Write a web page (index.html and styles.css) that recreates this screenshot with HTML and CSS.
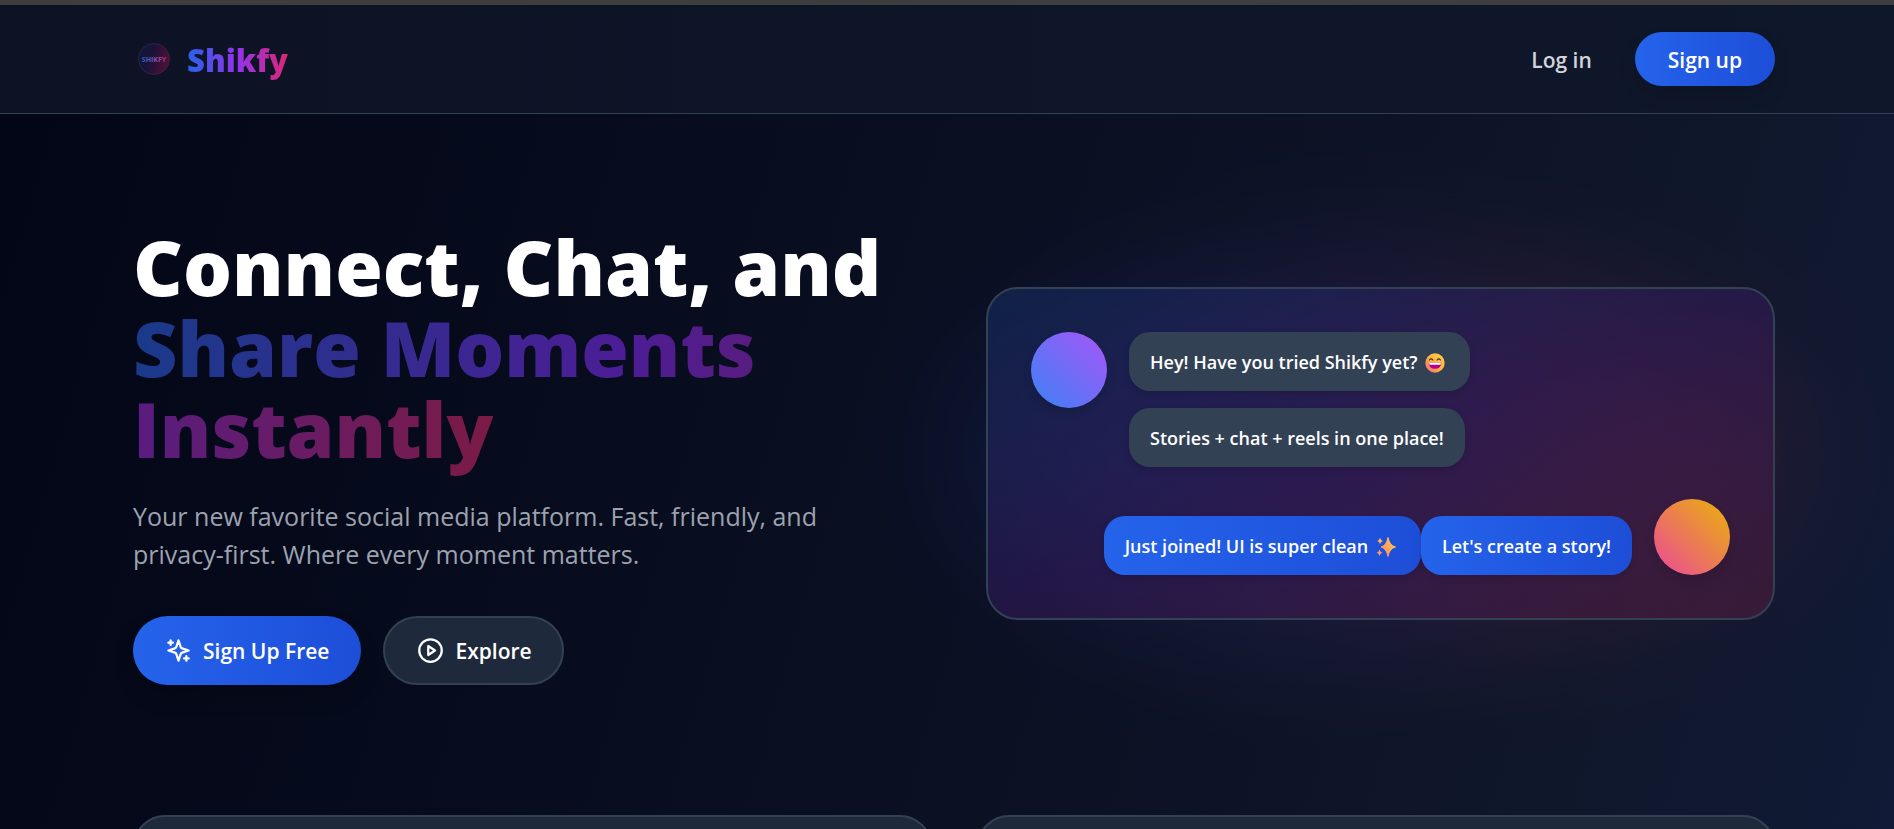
FILE: index.html
```html
<!DOCTYPE html>
<html lang="en">
<head>
<meta charset="utf-8">
<meta name="viewport" content="width=device-width, initial-scale=1">
<title>Shikfy</title>
<link rel="stylesheet" href="styles.css">
</head>
<body>
<header class="site-header">
  <div class="container header-row">
    <a class="brand" href="#">
      <svg class="brand-logo" viewBox="0 0 32 32" aria-hidden="true">
        <defs>
          <linearGradient id="logo-bg" x1="0" y1="0" x2="1" y2="0.3"><stop offset="0" stop-color="#071a3c"/><stop offset=".5" stop-color="#1c1238"/><stop offset="1" stop-color="#4c1038"/></linearGradient>
          <linearGradient id="logo-text" x1="0" y1="0" x2="1" y2="0"><stop offset="0" stop-color="#2563b8"/><stop offset=".5" stop-color="#7a58b8"/><stop offset="1" stop-color="#b8326e"/></linearGradient>
        </defs>
        <circle cx="16" cy="16" r="15.5" fill="url(#logo-bg)" stroke="#3a2a4c" stroke-width=".7"/>
        <text class="logo-word" x="16" y="19" text-anchor="middle" fill="url(#logo-text)">SHIKFY</text>
      </svg>
      <span class="brand-name">Shikfy</span>
    </a>
    <nav class="header-nav">
      <a class="login" href="#">Log in</a>
      <a class="signup" href="#">Sign up</a>
    </nav>
  </div>
</header>
<main>
  <section class="container hero">
    <div class="intro">
      <h1>Connect, Chat, and <span class="accent">Share Moments Instantly</span></h1>
      <p>Your new favorite social media platform. Fast, friendly, and privacy-first. Where every moment matters.</p>
      <div class="actions">
        <button class="btn btn-primary" type="button">
          <svg class="icon" viewBox="0 0 24 24" aria-hidden="true"><path d="M12 3l-1.900 5.800a2 2 0 0 1-1.300 1.300L3 12l5.800 1.900a2 2 0 0 1 1.300 1.300L12 21l1.900-5.800a2 2 0 0 1 1.300-1.300L21 12l-5.800-1.900a2 2 0 0 1-1.300-1.300L12 3Z"/><path d="M5 3v4M19 17v4M3 5h4M17 19h4"/></svg>
          Sign Up Free
        </button>
        <button class="btn btn-outline" type="button">
          <svg class="icon" viewBox="0 0 24 24" aria-hidden="true"><circle cx="12" cy="12" r="10"/><path d="M10 8l6 4-6 4z"/></svg>
          Explore
        </button>
      </div>
    </div>
    <div class="preview">
      <div class="chat">
        <div class="incoming">
          <div class="avatar avatar-blue"></div>
          <div class="messages">
            <div class="bubble">Hey! Have you tried Shikfy yet?
              <svg class="emoji" viewBox="0 0 20 20" role="img" aria-label="Grinning face">
                <defs><linearGradient id="face" x1="0" y1="1" x2="1" y2="0"><stop offset="0" stop-color="#f0608a"/><stop offset=".45" stop-color="#ffb13b"/><stop offset="1" stop-color="#ffd34a"/></linearGradient></defs>
                <circle cx="10" cy="10" r="9.700" fill="url(#face)"/>
                <path d="M4.500 7q1.700-2.400 3.400 0M12.100 7q1.700-2.400 3.400 0" fill="none" stroke="#4b2b35" stroke-width="1.200" stroke-linecap="round"/>
                <path d="M3.600 9.800h12.800q-.3 6-6.400 6t-6.400-6z" fill="#b4008a"/><path d="M4 9.800h12l-.5 2H4.500z" fill="#fff"/>
              </svg>
            </div>
            <div class="bubble">Stories + chat + reels in one place!</div>
          </div>
        </div>
        <div class="outgoing">
          <div class="bubble bubble-own">Just joined! UI is super clean
            <svg class="emoji" viewBox="0 0 20 20" role="img" aria-label="Sparkles">
              <defs><linearGradient id="spark" x1="0" y1="1" x2="1" y2="0"><stop offset="0" stop-color="#ff8068"/><stop offset="1" stop-color="#ffd34e"/></linearGradient></defs>
              <g fill="url(#spark)"><path d="M12 .5Q13.500 8.500 19.500 10Q13.500 11.500 12 19.500Q10.500 11.500 5 10Q10.500 8.500 12 .5Z" stroke="url(#spark)" stroke-width="1" stroke-linejoin="round"/><path d="M4 .8q.6 2.600 3 3.200-2.400.6-3 3.200-.6-2.600-3-3.200 2.400-.6 3-3.200zM3.500 12.500q.6 2.600 3 3.200-2.400.6-3 3.200-.6-2.600-3-3.200 2.400-.6 3-3.200z"/></g>
            </svg>
          </div>
          <div class="bubble bubble-own">Let's create a story!</div>
          <div class="avatar avatar-warm"></div>
        </div>
      </div>
    </div>
  </section>
  <section class="container features">
    <article class="feature"></article>
    <article class="feature"></article>
  </section>
</main>
</body>
</html>
```

FILE: styles.css
```css
* { box-sizing: border-box; }

body {
  margin: 0;
  height: 100vh;
  overflow: hidden;
  color: #fff;
  font-family: "Segoe UI", "Open Sans", "Noto Sans", sans-serif;
  background: linear-gradient(106deg, #020617, #0b1022 55%, #0f172a 82%, #111a36);
}

a { color: inherit; text-decoration: none; }

.container {
  width: 100%;
  max-width: 1728px;
  margin: 0 auto;
  padding: 0 36px 0 50px;
}

.site-header {
  position: relative;
  z-index: 1;
  border-top: 5px solid #3e3e3e;
  border-bottom: 1px solid #334155;
  background: linear-gradient(to right, #0d1325, #0f172a);
}

.header-row {
  display: flex;
  align-items: center;
  justify-content: space-between;
  height: 108px;
}

.brand {
  display: flex;
  align-items: center;
  gap: 17px;
  padding-left: 5px;
}

.brand-logo { width: 32px; height: 32px; }

.logo-word {
  font-family: "Open Sans", sans-serif;
  font-size: 7px;
  font-weight: 700;
}

.brand-name {
  padding-top: 2px;
  font-size: 31px;
  line-height: 44px;
  font-weight: 800;
  color: transparent;
  background: linear-gradient(to right, #2563eb, #9333ea 50%, #db2777);
  background-clip: text;
}

.header-nav {
  display: flex;
  align-items: center;
  gap: 43px;
  font-size: 21px;
  line-height: 32px;
}

.login { padding-top: 1px; color: #d1d5db; font-weight: 600; }

.signup {
  padding: 12px 33px 10px;
  border-radius: 27px;
  font-weight: 600;
  background: linear-gradient(to right, #2563eb, #1d4ed8);
  box-shadow: 0 10px 18px #00000020;
}

.hero {
  display: grid;
  grid-template-columns: 1fr 1fr;
  gap: 64px;
  align-items: center;
  padding-top: 108px;
  padding-bottom: 108px;
}

h1 {
  margin: 0;
  padding-top: 4px;
  font-size: 77px;
  line-height: 81px;
  font-weight: 800;
}

.accent {
  color: transparent;
  background: linear-gradient(to right, #1a3a8a, #4c1d95 50%, #7b1b45);
  background-clip: text;
}

.intro p {
  max-width: 720px;
  margin: 28px 0 43px;
  color: #9ca3af;
  font-size: 25px;
  line-height: 38px;
}

.actions { display: flex; gap: 22px; }

.btn {
  display: flex;
  align-items: center;
  gap: 11px;
  height: 69px;
  padding: 0 32px;
  border: 0;
  border-radius: 35px;
  color: #fff;
  font: 600 21px/32px "Segoe UI", "Open Sans", "Noto Sans", sans-serif;
}

.btn-primary {
  background: linear-gradient(to right, #2563eb, #1d4ed8);
  box-shadow: 0 12px 20px #00000030;
}

.btn-outline {
  padding: 0 30px 0 32px;
  border: 2px solid #334155;
  background: #1e293b;
}

.icon {
  width: 27px;
  height: 27px;
  fill: none;
  stroke: currentColor;
  stroke-width: 2;
  stroke-linecap: round;
  stroke-linejoin: round;
}

.preview { position: relative; }

.preview::before {
  content: "";
  position: absolute;
  inset: -22px;
  border-radius: 50%;
  background: linear-gradient(to right, #1d4ed8, #7e3aa8 50%, #b83250 80%, #a02c50);
  opacity: .18;
  filter: blur(72px);
}

.chat {
  position: relative;
  display: grid;
  gap: 32px;
  padding: 43px;
  border: 2px solid #334155;
  border-radius: 32px;
  background: linear-gradient(to bottom right, #14306488, #371a6080 50%, #561c3c88);
}

.incoming { display: flex; gap: 22px; }

.messages {
  display: flex;
  flex-direction: column;
  align-items: flex-start;
  gap: 17px;
}

.avatar {
  flex: none;
  width: 76px;
  height: 76px;
  border-radius: 50%;
  box-shadow: 0 5px 8px #00000020;
}

.avatar-blue { background: linear-gradient(to top right, #3b82f6, #a855f7); }

.avatar-warm {
  margin-left: 22px;
  background: linear-gradient(to top right, #ec4899, #eab308);
}

.bubble {
  padding: 17px 21px 15px;
  border-radius: 21px;
  font-size: 18px;
  line-height: 27px;
  font-weight: 600;
  white-space: nowrap;
  background: #334155;
  box-shadow: 0 3px 6px #00000020;
}

.bubble-own { background: linear-gradient(to right, #2563eb, #1d4ed8); }

.emoji {
  width: 20px;
  height: 20px;
  margin: 0 4px 0 3px;
  vertical-align: -4px;
}

.outgoing {
  display: flex;
  align-items: flex-end;
  justify-content: flex-end;
}

.features {
  display: grid;
  grid-template-columns: 1fr 1fr;
  gap: 45px;
  padding-top: 22px;
}

.feature {
  min-height: 320px;
  border: 2px solid #334155;
  border-radius: 32px;
  background: #1e293b;
}
```
